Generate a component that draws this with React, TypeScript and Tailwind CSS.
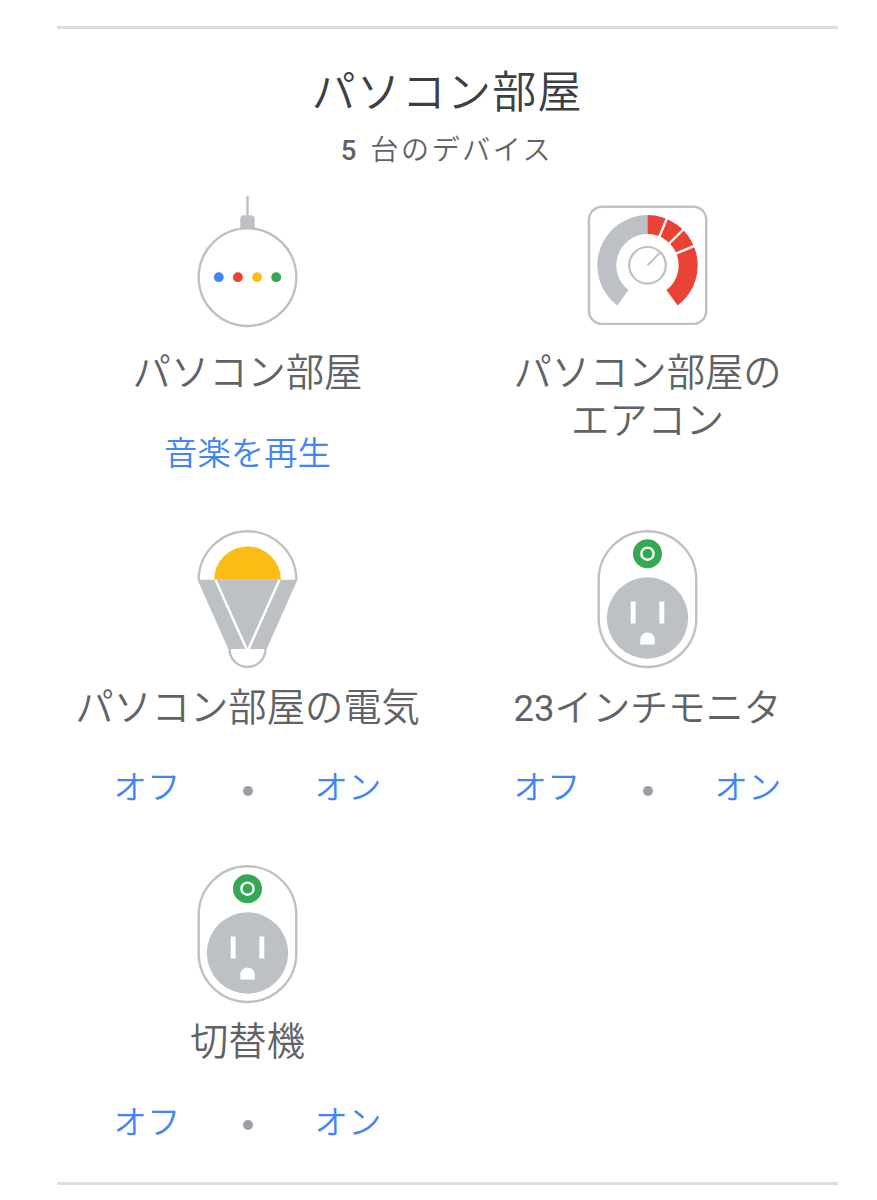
import type { ReactNode } from 'react';

const GREY = '#bdc1c6';

function Icon({ children }: { children: ReactNode }) {
  return (
    <svg viewBox="-71.5 0 144 144" className="block h-36 w-36 shrink-0" fill="none" aria-hidden="true">
      {children}
    </svg>
  );
}

function SpeakerIcon() {
  return (
    <Icon>
      <path d="M0 3V24" stroke={GREY} strokeWidth="2.4" />
      <path d="M-7.2 36V26.2a4 4 0 0 1 4-4H3.2a4 4 0 0 1 4 4V36Z" fill={GREY} />
      <circle cx="0" cy="84.2" r="48.8" fill="#fff" stroke={GREY} strokeWidth="2.4" />
      <circle cx="-28.7" cy="84.2" r="4.9" fill="#4285f4" />
      <circle cx="-9.6" cy="84.2" r="4.9" fill="#ea4335" />
      <circle cx="9.6" cy="84.2" r="4.9" fill="#fbbc15" />
      <circle cx="28.7" cy="84.2" r="4.9" fill="#34a853" />
    </Icon>
  );
}

function ThermostatIcon() {
  return (
    <Icon>
      <rect x="-58.5" y="13.7" width="117.2" height="117.2" rx="13" stroke={GREY} strokeWidth="2.4" />
      <g transform="translate(0 72.3)">
        <path d="M0 -50.2A50.2 50.2 0 0 0 -30.2 40.1L-18.9 24.8A31.2 31.2 0 0 1 0 -31.2Z" fill={GREY} />
        <path d="M0 -50.2A50.2 50.2 0 0 1 30.2 40.1L18.9 24.8A31.2 31.2 0 0 0 0 -31.2Z" fill="#ea4335" />
        <path d="M11.2 -27.1L20.5 -49.4M20.8 -20.8L37.8 -37.8M27.1 -11.2L49.4 -20.5" stroke="#fff" strokeWidth="2.4" />
        <circle r="18.3" stroke={GREY} strokeWidth="2.2" />
        <path d="M0 0L12.6 -12.6" stroke={GREY} strokeWidth="2" />
      </g>
    </Icon>
  );
}

function BulbIcon() {
  return (
    <Icon>
      <path d="M-48.8 53A48.8 48.8 0 0 1 48.8 53" stroke={GREY} strokeWidth="2.4" />
      <path d="M-33.4 52.8A33.4 33.4 0 0 1 33.4 52.8Z" fill="#fbbc15" />
      <path d="M-50 52.8H50L19.2 122H-19.2Z" fill={GREY} />
      <path d="M-32 52.8L-1 122M32 52.8L1 122" stroke="#fff" strokeWidth="2.4" />
      <path d="M-18 122A18 18 0 0 0 18 122" stroke={GREY} strokeWidth="2.4" />
    </Icon>
  );
}

function PlugIcon() {
  return (
    <Icon>
      <rect x="-48.8" y="4.2" width="97.6" height="135.8" rx="48.8" stroke={GREY} strokeWidth="2.4" />
      <circle cx="0" cy="26.7" r="14.5" fill="#34a853" />
      <circle cx="0" cy="26.7" r="6.1" stroke="#fff" strokeWidth="2.4" />
      <circle cx="0" cy="91" r="40.7" fill={GREY} />
      <path d="M-16.8 74.5h4.9v22h-4.9ZM11.9 74.5h4.9v22h-4.9Z" fill="#fff" />
      <path d="M-7.2 117.6V112.6a7.2 7.2 0 0 1 14.4 0V117.6Z" fill="#fff" />
    </Icon>
  );
}

function Action({ label }: { label: string }) {
  return <button className="min-w-[67px] whitespace-nowrap text-center">{label}</button>;
}

function PowerActions() {
  return (
    <div className="flex w-[268px] items-center justify-between">
      <Action label="オフ" />
      <span className="mt-[7px] size-[10px] rounded-full bg-[#9aa0a6]" />
      <Action label="オン" />
    </div>
  );
}

function Device({ icon, name, children }: { icon: ReactNode; name: ReactNode; children?: ReactNode }) {
  return (
    <article className="flex flex-col items-center">
      {icon}
      <h2 className="mt-[12.5px] whitespace-nowrap text-center text-[38.3px] leading-[47.5px] text-[#5f6368]">{name}</h2>
      {children && <div className="mt-[36px] flex h-10 items-center text-[33.4px] leading-10 text-[#4285f4]">{children}</div>}
    </article>
  );
}

export default function App() {
  return (
    <main
      lang="ja"
      className="flex h-[1200px] w-[877px] flex-col overflow-hidden bg-white pt-[26px] font-['Inter','Noto_Sans_CJK_JP',sans-serif] font-[350]"
    >
      <hr className="ml-[57px] h-[3px] w-[781px] shrink-0 border-0 bg-[#dddde1]" />
      <header className="flex w-[894px] shrink-0 flex-col items-center">
        <h1 className="mt-[35px] text-[44px] leading-[56px] tracking-[1.2px] text-[#3c4043]">パソコン部屋</h1>
        <p className="mt-[10px] h-10 text-[28px] leading-10 tracking-[2.6px] text-[#5f6368]">
          <span className="mr-px font-['Roboto',sans-serif] text-[27.5px] font-medium leading-none">5</span> 台のデバイス
        </p>
      </header>
      <section className="ml-[47.5px] mt-[22.75px] grid w-[800px] shrink-0 grid-cols-2 auto-rows-[334.5px]">
        <Device icon={<SpeakerIcon />} name="パソコン部屋">
          <Action label="音楽を再生" />
        </Device>
        <Device
          icon={<ThermostatIcon />}
          name={
            <>
              パソコン部屋の
              <br />
              エアコン
            </>
          }
        />
        <Device icon={<BulbIcon />} name="パソコン部屋の電気">
          <PowerActions />
        </Device>
        <Device
          icon={<PlugIcon />}
          name={
            <>
              <span className="font-['Roboto',sans-serif] text-[36.5px] font-normal leading-none">23</span>
              <span className="text-[37.8px] leading-none">インチモニタ</span>
            </>
          }
        >
          <PowerActions />
        </Device>
        <Device icon={<PlugIcon />} name="切替機">
          <PowerActions />
        </Device>
      </section>
      <hr className="-mt-[14.25px] ml-[57px] h-[3px] w-[781px] shrink-0 border-0 bg-[#dddde1]" />
    </main>
  );
}
